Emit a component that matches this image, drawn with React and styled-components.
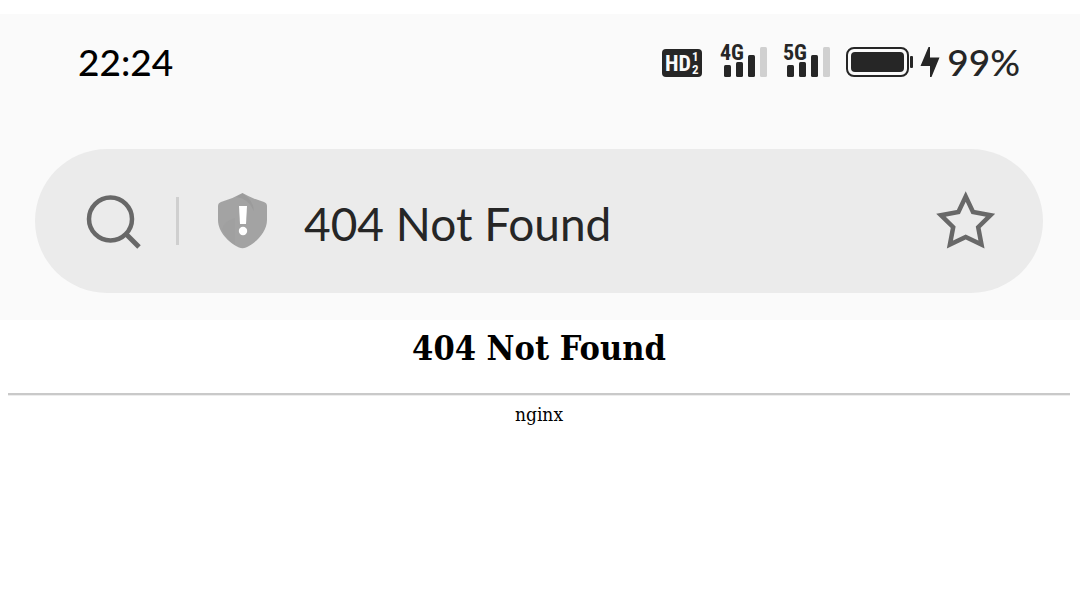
import React from "react";
import styled, { createGlobalStyle } from "styled-components";

const GlobalStyle = createGlobalStyle`
  * { box-sizing: border-box; }
  body { margin: 0; background: #fff; color: #000; }
`;

const Screen = styled.div`
  padding-top: 14px;
`;

const BrowserHeader = styled.header`
  height: 306px;
  padding: 28px 37px 0 35px;
  background: #fafafa;
`;

const StatusBar = styled.div`
  display: flex;
  justify-content: space-between;
  align-items: center;
  height: 40px;
  padding: 0 23px 0 43px;
  font-family: Lato, sans-serif;
  font-size: 37px;
  font-weight: 500;
  line-height: 40px;
`;

const StatusIcons = styled.div`
  display: flex;
  align-items: center;
  color: #262626;
`;

const HdBadge = styled.svg`
  width: 40px;
  height: 30px;
  margin-right: 18px;
  font-family: "Roboto Condensed", Roboto, sans-serif;
  font-weight: 700;
`;

const SignalIcon = styled.svg`
  width: 48px;
  height: 48px;
  margin-right: 15px;
  font-family: "Roboto Condensed", Roboto, sans-serif;
  font-weight: 700;
`;

const BatteryIcon = styled.svg`
  width: 67px;
  height: 30px;
`;

const BoltIcon = styled.svg`
  width: 20px;
  height: 30px;
  margin: 0 7px;
`;

const AddressBar = styled.div`
  display: flex;
  align-items: center;
  height: 144px;
  margin-top: 67px;
  padding: 0 47px 0 51px;
  border-radius: 72px;
  background: #ebebeb;
`;

const IconButton = styled.button`
  flex: none;
  display: flex;
  padding: 0;
  border: 0;
  background: none;
  color: #686868;
`;

const Divider = styled.span`
  width: 3px;
  height: 48px;
  margin: 0 39px 0 34px;
  background: #cfcfcf;
`;

const PageAddress = styled.input`
  flex: 1;
  min-width: 0;
  height: 72px;
  margin-left: 36px;
  padding: 4px 0 0;
  border: 0;
  outline: 0;
  background: none;
  color: #262626;
  font-family: Lato, sans-serif;
  font-size: 46px;
`;

const ErrorPage = styled.main`
  padding: 4px 10px 0 8px;
  font-family: "DejaVu Serif Condensed", "DejaVu Serif", serif;
  text-align: center;
`;

const ErrorTitle = styled.h1`
  margin: 0;
  font-size: 34px;
  line-height: 48px;
`;

const Rule = styled.hr`
  height: 3px;
  margin: 21px 0 6px;
  border: 0;
  border-bottom: 1px solid #ededed;
  background: #c9c9c9;
`;

const ServerName = styled.p`
  margin: 0;
  font-size: 19px;
  line-height: 24px;
`;

function Signal({ label }) {
  return (
    <SignalIcon viewBox="0 0 48 48" role="img" aria-label={label + " signal"}>
      <text x="0" y="22" fontSize="22" fill="#262626">{label}</text>
      <rect x="4" y="27" width="7" height="12" rx="1.5" fill="currentColor" />
      <rect x="16" y="24" width="7" height="15" rx="1.5" fill="currentColor" />
      <rect x="28" y="17" width="7" height="22" rx="1.5" fill="currentColor" />
      <rect x="40" y="9" width="7" height="30" rx="1.5" fill="#d0d0d0" />
    </SignalIcon>
  );
}

export default function App() {
  return (
    <>
      <GlobalStyle />
      <Screen>
        <BrowserHeader>
          <StatusBar>
            <time>22:24</time>
            <StatusIcons>
              <HdBadge viewBox="0 0 40 30" role="img" aria-label="HD 1 2">
                <rect y="2" width="40" height="28" rx="4" fill="currentColor" />
                <text x="3" y="24" fontSize="22" fill="#fafafa">HD</text>
                <text x="30" y="14" fontSize="13" fill="#fafafa">1</text>
                <text x="30" y="27" fontSize="13" fill="#fafafa">2</text>
              </HdBadge>
              <Signal label="4G" />
              <Signal label="5G" />
              <BatteryIcon viewBox="0 0 67 30" aria-hidden="true">
                <rect x="1" y="1" width="61" height="28" rx="7" fill="none" stroke="currentColor" strokeWidth="2" />
                <rect x="5" y="5" width="53" height="20" rx="4" fill="currentColor" />
                <rect x="64" y="9" width="3" height="12" rx="1" fill="currentColor" />
              </BatteryIcon>
              <BoltIcon viewBox="0 0 20 30" aria-hidden="true">
                <path d="M8.500 0H10V10.500H19.500L11.500 30H10V19H0.500z" fill="currentColor" />
              </BoltIcon>
              <span>99%</span>
            </StatusIcons>
          </StatusBar>
          <AddressBar>
            <IconButton type="button" aria-label="Search">
              <svg width="56" height="56" viewBox="0 0 56 56" fill="none" stroke="currentColor">
                <circle cx="24.500" cy="26" r="21.500" strokeWidth="4.500" />
                <path d="M39 40L53 54" strokeWidth="5" />
              </svg>
            </IconButton>
            <Divider />
            <IconButton type="button" aria-label="Site security">
              <svg width="50" height="56" viewBox="0 0 50 56">
                <path d="M24.500 0Q35 6 46 9Q49 10 49 13V27C49 39 38 50 28 54.500Q24.500 56 21 54.500C11 50 0 39 0 27V13Q0 10 3 9Q14 6 24.500 0z" fill="#a3a3a3" />
                <path d="M24.500 0.500Q35 6.500 36 18Q30 5 18 4Z" fill="#9b9b9b" />
                <path d="M4 36Q6 28 17 25V52Q8 46 4 36z" fill="#a0a0a0" />
                <path d="M21 13H29L28 31H22z" fill="#fff" />
                <circle cx="25" cy="38" r="4.200" fill="#fff" />
              </svg>
            </IconButton>
            <PageAddress aria-label="Page address" defaultValue="404 Not Found" />
            <IconButton type="button" aria-label="Add bookmark">
              <svg width="60" height="60" viewBox="0 0 60 60" fill="none" stroke="currentColor" strokeWidth="4.500">
                <path d="M29.700 5.500L37 21L54.500 24.200L42.200 36.200L45.500 53.500L29.700 46L13.900 53.500L17.200 36.200L4.900 24.200L22.400 21Z" />
              </svg>
            </IconButton>
          </AddressBar>
        </BrowserHeader>
        <ErrorPage>
          <ErrorTitle>404 Not Found</ErrorTitle>
          <Rule />
          <ServerName>nginx</ServerName>
        </ErrorPage>
      </Screen>
    </>
  );
}
